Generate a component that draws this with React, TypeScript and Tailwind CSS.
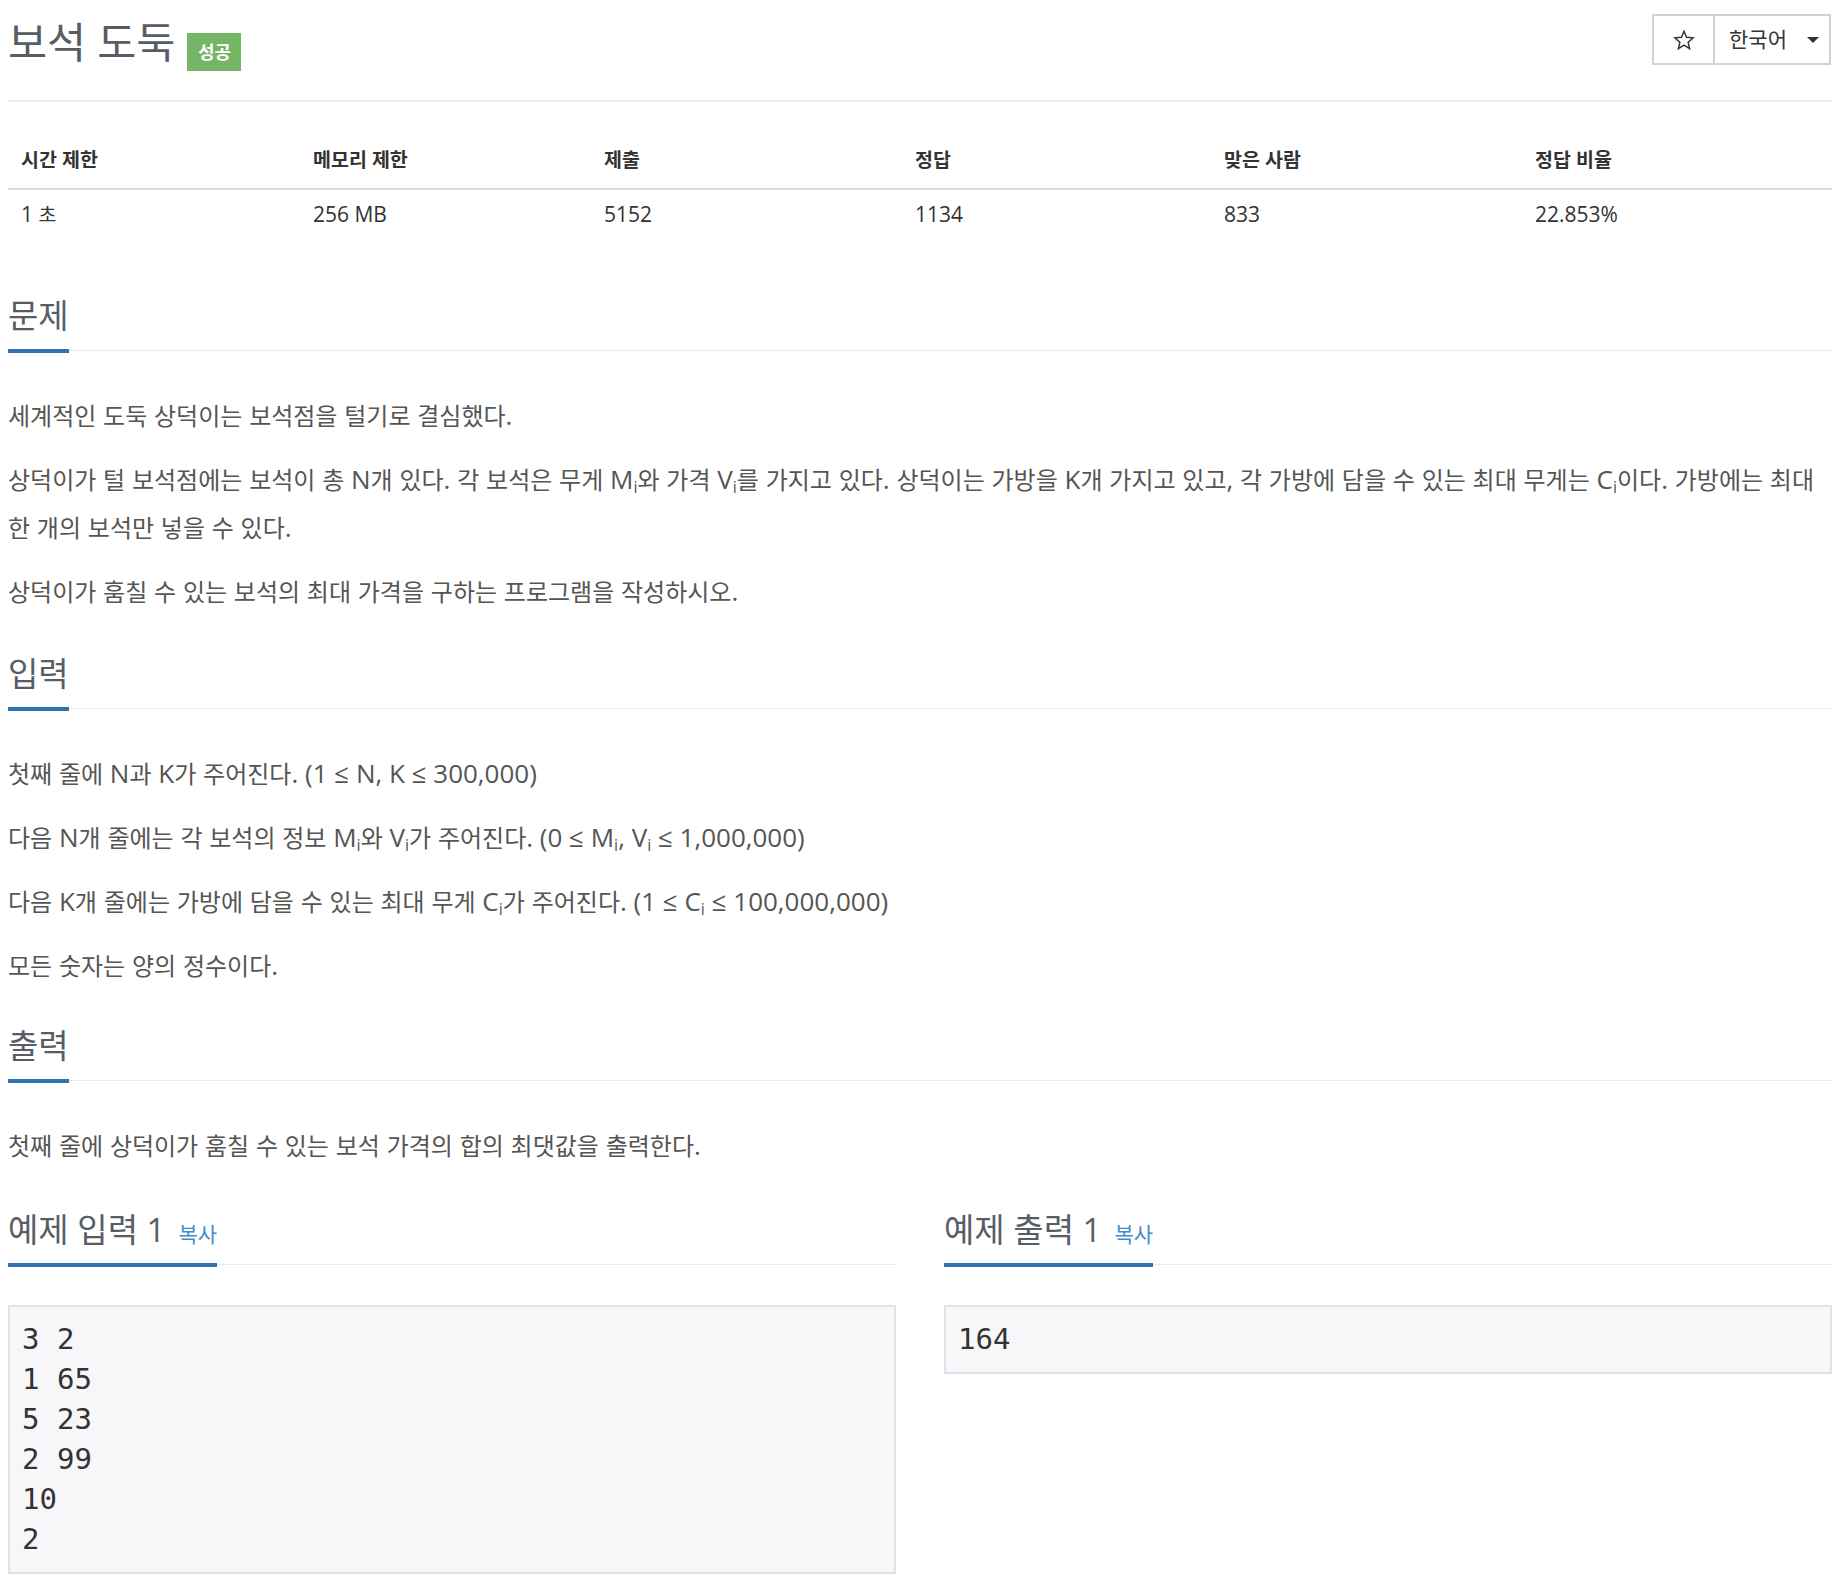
import React from "react";

const stats = [
  { label: "시간 제한", value: "1 초" },
  { label: "메모리 제한", value: "256 MB" },
  { label: "제출", value: "5152" },
  { label: "정답", value: "1134" },
  { label: "맞은 사람", value: "833" },
  { label: "정답 비율", value: "22.853%" },
];

// Hangul runs render a touch smaller than the Latin text around them
function K({ t, small }: { t: string; small?: boolean }) {
  const parts = t.split(/([\uAC00-\uD7A3]+)/);
  const cls = small ? "text-[19.5px] leading-none" : "text-[24px] leading-none";
  return (
    <>
      {parts.map((p, i) =>
        i % 2 === 1 ? (
          <span key={i} className={cls}>
            {p}
          </span>
        ) : (
          p
        )
      )}
    </>
  );
}

function Headline({ children }: { children: React.ReactNode }) {
  return (
    <div className="flex border-b border-dotted border-[#d6d6d6]">
      <h2 className="mb-[-3px] border-b-4 border-[#2f72b5] pb-[16px] text-[33px] leading-[34px] font-normal text-[#585d65]">
        {children}
      </h2>
    </div>
  );
}

function P({ children }: { children: React.ReactNode }) {
  return <p className="mb-[16px]">{children}</p>;
}

function Sub({ children }: { children: React.ReactNode }) {
  return <sub className="text-[16px]">{children}</sub>;
}

export default function App() {
  return (
    <div className="min-h-[1592px] bg-white px-[8px] font-['Open_Sans','Noto_Sans_CJK_KR',sans-serif] text-[#555]">
      <div className="w-[1824px]">
        {/* title bar */}
        <div className="flex h-[102px] items-start justify-between border-b-2 border-[#eee]">
          <div className="flex items-start pt-[20px]">
            <h1 className="text-[42.5px] leading-[44px] font-normal text-[#585d65]">보석 도둑</h1>
            <span className="ml-[12px] mt-[13px] flex h-[38px] w-[54px] items-center justify-center bg-[#74b566] text-[18px] font-bold text-white">
              성공
            </span>
          </div>
          <div className="mr-[1px] mt-[14px] flex h-[51px]">
            <button className="flex w-[63px] items-center justify-center border-2 border-[#d2d2d2]">
              <svg width="22" height="22" viewBox="0 0 24 24" fill="none" stroke="#333" strokeWidth="1.6" strokeLinejoin="miter">
                <path d="M12 2.5l2.8 6.6 7.1.6-5.4 4.7 1.6 7-6.1-3.7-6.1 3.7 1.6-7L2.1 9.7l7.1-.6z" />
              </svg>
            </button>
            <button className="ml-[-2px] flex w-[118px] items-center gap-[20px] border-2 border-[#d2d2d2] pl-[14px] text-[21px] text-[#333]">
              <span>한국어</span>
              <span className="h-0 w-0 border-x-[6px] border-t-[6px] border-x-transparent border-t-[#333]" />
            </button>
          </div>
        </div>

        {/* problem info table */}
        <div className="mt-[37px] grid grid-cols-[292px_291px_311px_309px_311px_1fr] text-[#333]">
          {stats.map((s) => (
            <div key={s.label} className="border-b-2 border-[#ddd] px-[13px] pt-[8px] pb-[15px] text-[19.5px] leading-[26px] font-bold">
              {s.label}
            </div>
          ))}
          {stats.map((s) => (
            <div key={s.label + "v"} className="px-[13px] py-[11px] text-[21px] leading-[26px]">
              <K t={s.value} small />
            </div>
          ))}
        </div>

        <div className="text-[26px] leading-[48px]">
          <section className="mt-[61px]">
            <Headline>문제</Headline>
            <div className="mt-[40px]">
              <P>
                <K t="세계적인 도둑 상덕이는 보석점을 털기로 결심했다." />
              </P>
              <P>
                <K t="상덕이가 털 보석점에는 보석이 총 N개 있다. 각 보석은 무게 M" />
                <Sub>i</Sub>
                <K t="와 가격 V" />
                <Sub>i</Sub>
                <K t="를 가지고 있다. 상덕이는 가방을 K개 가지고 있고, 각 가방에 담을 수 있는 최대 무게는 C" />
                <Sub>i</Sub>
                <K t="이다. 가방에는 최대 한 개의 보석만 넣을 수 있다." />
              </P>
              <P>
                <K t="상덕이가 훔칠 수 있는 보석의 최대 가격을 구하는 프로그램을 작성하시오." />
              </P>
            </div>
          </section>

          <section className="mt-[42px]">
            <Headline>입력</Headline>
            <div className="mt-[40px]">
              <P>
                <K t="첫째 줄에 N과 K가 주어진다. (1 ≤ N, K ≤ 300,000)" />
              </P>
              <P>
                <K t="다음 N개 줄에는 각 보석의 정보 M" />
                <Sub>i</Sub>
                <K t="와 V" />
                <Sub>i</Sub>
                <K t="가 주어진다. (0 ≤ M" />
                <Sub>i</Sub>
                <K t=", V" />
                <Sub>i</Sub>
                <K t=" ≤ 1,000,000)" />
              </P>
              <P>
                <K t="다음 K개 줄에는 가방에 담을 수 있는 최대 무게 C" />
                <Sub>i</Sub>
                <K t="가 주어진다. (1 ≤ C" />
                <Sub>i</Sub>
                <K t=" ≤ 100,000,000)" />
              </P>
              <P>
                <K t="모든 숫자는 양의 정수이다." />
              </P>
            </div>
          </section>

          <section className="mt-[40px]">
            <Headline>출력</Headline>
            <div className="mt-[40px]">
              <P>
                <K t="첫째 줄에 상덕이가 훔칠 수 있는 보석 가격의 합의 최댓값을 출력한다." />
              </P>
            </div>
          </section>

          {/* samples */}
          <div className="mt-[44px] grid grid-cols-2 gap-[48px]">
            {[
              { title: "예제 입력 1", data: "3 2\n1 65\n5 23\n2 99\n10\n2" },
              { title: "예제 출력 1", data: "164" },
            ].map((s) => (
              <section key={s.title}>
                <Headline>
                  {s.title}
                  <a className="ml-[13px] text-[21px] leading-none text-[#428bca]">복사</a>
                </Headline>
                <pre className="mt-[40px] border-2 border-[#e1e1e8] bg-[#f7f7f9] px-[12px] pt-[12px] pb-[13px] font-['DejaVu_Sans_Mono',monospace] text-[29px] leading-[40px] text-[#333]">
                  {s.data}
                </pre>
              </section>
            ))}
          </div>
        </div>
      </div>
    </div>
  );
}
